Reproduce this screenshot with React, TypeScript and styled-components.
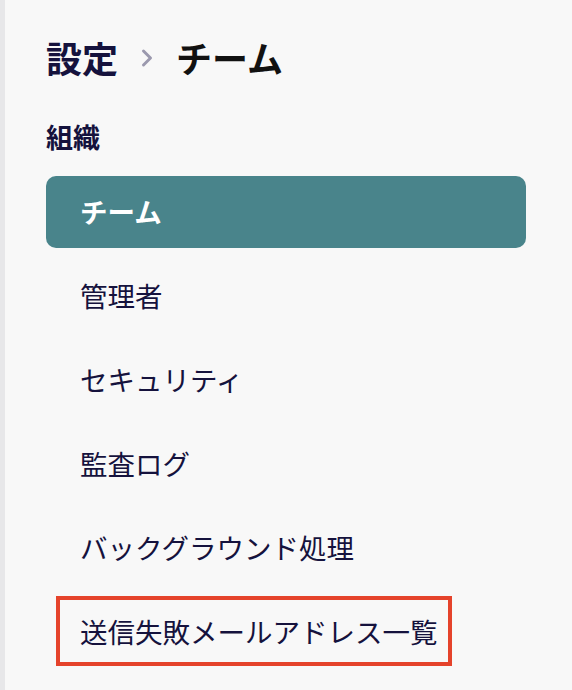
import { createGlobalStyle } from 'styled-components';
import styled from 'styled-components';

const GlobalStyle = createGlobalStyle`
  html, body {
    margin: 0;
    padding: 0;
    background: #f8f8f8;
  }
  body {
    font-family: 'Noto Sans CJK JP', 'Noto Sans', sans-serif;
  }
`;

const Sidebar = styled.nav`
  box-sizing: border-box;
  width: 572px;
  min-height: 690px;
  background: #f8f8f8;
  border-left: 5px solid #e7e7e9;
  padding: 32px 46px 0 41px;
  display: flex;
  flex-direction: column;
`;

const Breadcrumb = styled.h1`
  margin: 0;
  display: flex;
  align-items: center;
  gap: 22px;
  font-size: 36px;
  font-weight: 700;
  line-height: 50px;
  color: #15123d;
`;

const Current = styled.span`
  color: #111111;
`;

const Chevron = styled.svg`
  width: 14px;
  height: 20px;
  margin-top: 2px;
`;

const SectionTitle = styled.h2`
  margin: 37px 0 21px;
  font-size: 27px;
  font-weight: 700;
  line-height: 36px;
  color: #15123d;
`;

const Menu = styled.ul`
  list-style: none;
  margin: 0;
  padding: 0;
  display: flex;
  flex-direction: column;
  gap: 12px;
`;

const MenuItem = styled.li<{ $active?: boolean }>`
  position: relative;
  box-sizing: border-box;
  height: 72px;
  display: flex;
  align-items: center;
  padding-left: 34px;
  border-radius: 10px;
  font-size: 27.5px;
  line-height: 1;
  font-weight: ${(p) => (p.$active ? 700 : 400)};
  color: ${(p) => (p.$active ? '#ffffff' : '#15123d')};
  background: ${(p) => (p.$active ? '#49848b' : 'transparent')};
`;

const Highlight = styled.span`
  position: absolute;
  left: 10px;
  top: 0;
  width: 396px;
  height: 70px;
  box-sizing: border-box;
  border: 4px solid #e5432b;
  pointer-events: none;
`;

const items = [
  { label: 'チーム', active: true },
  { label: '管理者' },
  { label: 'セキュリティ' },
  { label: '監査ログ' },
  { label: 'バックグラウンド処理' },
  { label: '送信失敗メールアドレス一覧', marked: true },
];

export default function App() {
  return (
    <>
      <GlobalStyle />
      <Sidebar>
        <Breadcrumb>
          <span>設定</span>
          <Chevron viewBox="0 0 14 20" fill="none">
            <path d="M3.5 3 L10.5 10 L3.5 17" stroke="#9b99ae" strokeWidth="3" strokeLinecap="round" strokeLinejoin="round" />
          </Chevron>
          <Current>チーム</Current>
        </Breadcrumb>
        <SectionTitle>組織</SectionTitle>
        <Menu>
          {items.map((it) => (
            <MenuItem key={it.label} $active={it.active}>
              {it.label}
              {it.marked && <Highlight />}
            </MenuItem>
          ))}
        </Menu>
      </Sidebar>
    </>
  );
}
